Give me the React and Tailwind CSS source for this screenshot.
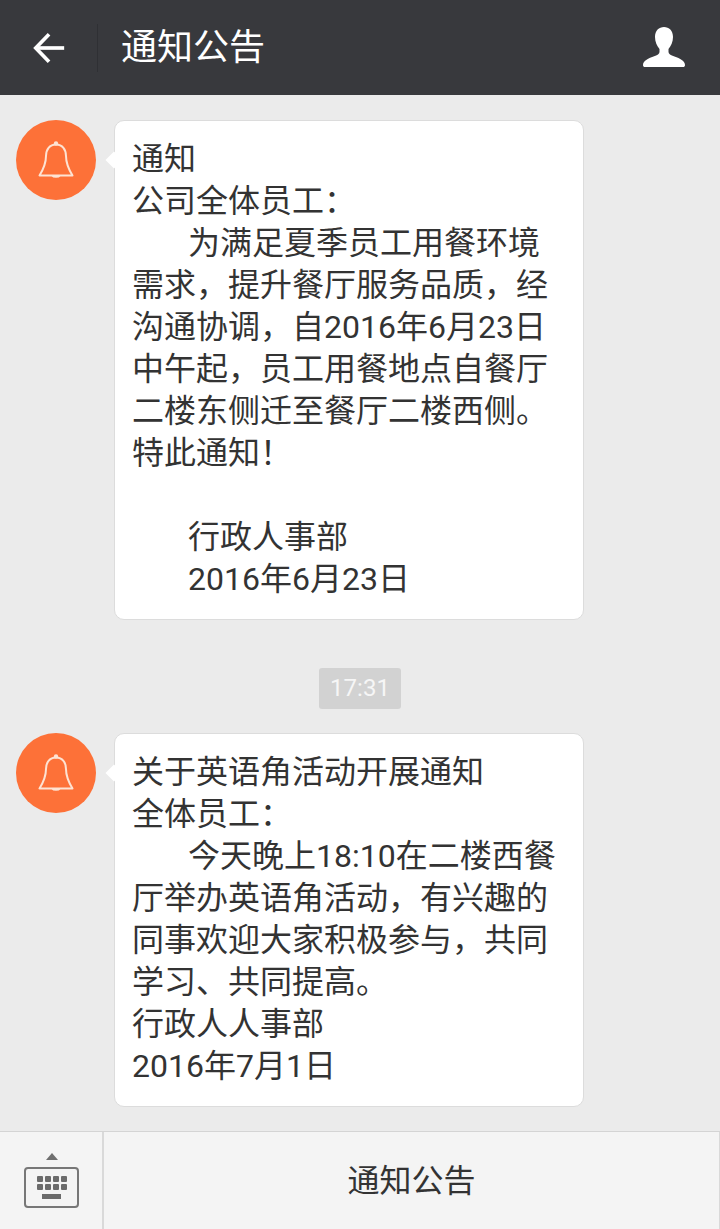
const notices = [
  {
    lines: [
      ['通知'],
      ['公司全体员工：'],
      ['为满足夏季员工用餐环境', true],
      ['需求，提升餐厅服务品质，经'],
      ['沟通协调，自2016年6月23日'],
      ['中午起，员工用餐地点自餐厅'],
      ['二楼东侧迁至餐厅二楼西侧。'],
      ['特此通知！'],
      ['\u00a0'],
      ['行政人事部', true],
      ['2016年6月23日', true],
    ],
  },
  {
    time: '17:31',
    lines: [
      ['关于英语角活动开展通知'],
      ['全体员工：'],
      ['今天晚上18:10在二楼西餐', true],
      ['厅举办英语角活动，有兴趣的'],
      ['同事欢迎大家积极参与，共同'],
      ['学习、共同提高。'],
      ['行政人人事部'],
      ['2016年7月1日'],
    ],
  },
]

function Bell() {
  return (
    <svg width="36" height="38" viewBox="0 0 36 38" fill="none" stroke="#fde3d3" strokeWidth="2" strokeLinejoin="round">
      <circle cx="18" cy="2.500" r="1.200" fill="#fde3d3" />
      <path d="M18 3.500c-6.500 0-10 5-10 11.500 0 8-2.500 13-6.500 19.500h33c-4-6.500-6.500-11.500-6.500-19.500 0-6.500-3.500-11.500-10-11.500z" />
      <path d="M14.500 34.500c.8 1.800 6.200 1.800 7 0" />
    </svg>
  )
}

function Notice({ notice }) {
  return (
    <>
      {notice.time && (
        <div className="flex justify-center -ml-4 mt-12 mb-6">
          <span className="w-[82px] h-[41px] rounded-[3px] bg-[#d2d2d2] text-[#f6f6f6] text-[24px] leading-[41px] text-center">{notice.time}</span>
        </div>
      )}
      <div className="flex items-start">
        <div className="w-20 h-20 shrink-0 rounded-full bg-[#fd7138] flex items-center justify-center">
          <Bell />
        </div>
        <div className="relative ml-[18px] w-[470px] rounded-[10px] bg-white border border-[#dcdcdc] pl-[17px] pt-[17px] pb-[19px]">
          <div className="absolute -left-[7px] top-[33px] w-3 h-3 rotate-45 bg-white" />
          {notice.lines.map(([text, indent], i) => (
            <div key={i} className={`h-[42px] leading-[42px] whitespace-nowrap ${indent ? 'pl-[56px]' : ''}`}>{text}</div>
          ))}
        </div>
      </div>
    </>
  )
}

export default function App() {
  return (
    <div className="w-[720px] h-[1229px] flex flex-col bg-[#ebebeb] text-[#333333] text-[32px] font-['Roboto','Noto_Sans_CJK_SC',sans-serif] overflow-hidden">
      <header className="h-[95px] shrink-0 bg-[#38393d] flex items-center">
        <div className="w-[97px] flex justify-center pl-px">
          <svg width="33" height="32" viewBox="0 0 36 34" fill="none" stroke="#ffffff" strokeWidth="4">
            <path d="M34 17H3" />
            <path d="M17.500 2 3 17l14.500 15" />
          </svg>
        </div>
        <div className="w-px h-12 bg-[#2f3034]" />
        <h1 className="ml-[23px] text-[36px] text-white font-normal flex-1">通知公告</h1>
        <svg className="mr-[35px] mb-0.5" width="42" height="42" viewBox="0 0 42 42" fill="#ffffff">
          <path d="M21 1c-5 0-9 3.500-9 10 0 5 2 9 4.500 12v3c0 2-2 3-6 4.500C5 32.500 0 35 0 39c0 1.500.8 2 2 2h38c1.200 0 2-.5 2-2 0-4-5-6.500-10.500-8.500-4-1.500-6-2.500-6-4.500v-3c2.500-3 4.500-7 4.500-12 0-6.500-4-10-9-10z" />
        </svg>
      </header>

      <main className="flex-1 pt-[25px] pl-4">
        {notices.map((n, i) => (
          <Notice key={i} notice={n} />
        ))}
      </main>

      <footer className="h-[98px] shrink-0 flex bg-[#f4f4f4] border-t border-[#d4d4d4]">
        <div className="w-[104px] shrink-0 flex flex-col items-center pt-[21px] pl-px border-r-2 border-[#d9d9d9]">
          <div className="w-0 h-0 border-x-[6px] border-x-transparent border-b-[7px] border-b-[#6f6f6f] mb-[7px]" />
          <div className="w-[55px] h-[41px] rounded-[4px] border-2 border-[#777777] flex flex-col items-center pt-[7px]">
            <div className="grid grid-cols-4 gap-x-[2px] gap-y-[2px]">
              {Array.from({ length: 8 }).map((_, i) => (
                <span key={i} className="w-[6px] h-[6px] rounded-[1px] bg-[#6b6b6b]" />
              ))}
            </div>
            <span className="w-[19px] h-[5px] mt-[4px] bg-[#6b6b6b]" />
          </div>
        </div>
        <div className="flex-1 flex items-center justify-center border-r border-[#d9d9d9]">通知公告</div>
      </footer>
    </div>
  )
}
